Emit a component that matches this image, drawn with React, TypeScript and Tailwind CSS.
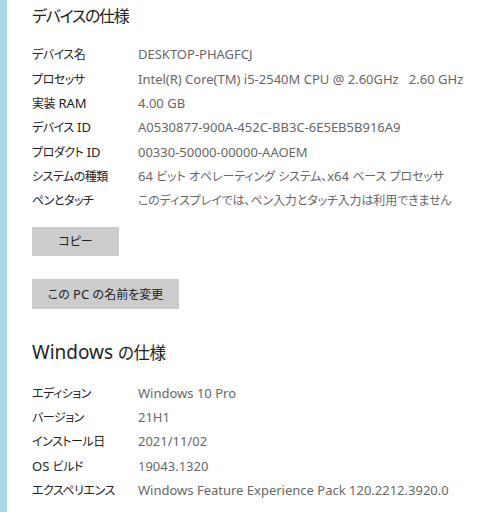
const deviceSpecs: [string, string][] = [
  ["デバイス名", "DESKTOP-PHAGFCJ"],
  ["プロセッサ", "Intel(R) Core(TM) i5-2540M CPU @ 2.60GHz   2.60 GHz"],
  ["実装 RAM", "4.00 GB"],
  ["デバイス ID", "A0530877-900A-452C-BB3C-6E5EB5B916A9"],
  ["プロダクト ID", "00330-50000-00000-AAOEM"],
  ["システムの種類", "64 ビット オペレーティング システム、x64 ベース プロセッサ"],
  ["ペンとタッチ", "このディスプレイでは、ペン入力とタッチ入力は利用できません"],
];

const windowsSpecs: [string, string][] = [
  ["エディション", "Windows 10 Pro"],
  ["バージョン", "21H1"],
  ["インストール日", "2021/11/02"],
  ["OS ビルド", "19043.1320"],
  ["エクスペリエンス", "Windows Feature Experience Pack 120.2212.3920.0"],
];

// Japanese glyphs in the screenshot are narrower (Yu Gothic UI), so CJK runs get a smaller size
const Jp = ({ text, jpClass }: { text: string; jpClass: string }) => (
  <>
    {text.split(/([\u3000-\u30ff\u4e00-\u9fff]+)/).map((part, i) =>
      /[\u3000-\u30ff\u4e00-\u9fff]/.test(part) ? (
        <span key={i} className={jpClass}>
          {part}
        </span>
      ) : (
        part
      )
    )}
  </>
);

const SpecRows = ({ rows }: { rows: [string, string][] }) => (
  <div className="flex flex-col">
    {rows.map(([label, value]) => (
      <div key={label} className="flex h-[24.33px] items-center text-[13px]">
        <span className="w-[106px] shrink-0 text-[#222222]">
          <Jp text={label} jpClass="text-[12px] tracking-[-0.04em]" />
        </span>
        <span className="whitespace-pre text-[#676767]">
          <Jp text={value} jpClass="text-[12px] tracking-[-0.01em]" />
        </span>
      </div>
    ))}
  </div>
);

export default function App() {
  return (
    <div
      className="flex h-[512px] w-[504px] overflow-hidden bg-white [font-feature-settings:'palt']"
      style={{ fontFamily: '"Noto Sans", "Noto Sans CJK JP", sans-serif' }}
    >
      {/* accent strip on the left */}
      <div className="w-[7px] shrink-0 bg-[#a9d8e6]" />

      <div className="flex flex-col pl-[25px]">
        <h1 className="mt-[2px] flex h-[28px] items-center text-[#222222]">
          <span className="text-[16px] tracking-[-0.08em]">デバイスの仕様</span>
        </h1>
        <div className="mt-[13px]">
          <SpecRows rows={deviceSpecs} />
        </div>

        <button className="mt-[14px] h-[29px] w-[87px] bg-[#cccccc] text-[12px] text-[#222222]">
          コピー
        </button>
        <button className="mt-[23px] h-[30px] w-[147px] bg-[#cccccc] text-[13px] text-[#222222]">
          <Jp text="この PC の名前を変更" jpClass="text-[12px]" />
        </button>

        <h1 className="mt-[29px] h-[28px] text-[19px] leading-[28px] text-[#222222]">
          <Jp text="Windows の仕様" jpClass="text-[16.5px] tracking-[-0.03em]" />
        </h1>
        <div className="mt-[15px]">
          <SpecRows rows={windowsSpecs} />
        </div>
      </div>
    </div>
  );
}
